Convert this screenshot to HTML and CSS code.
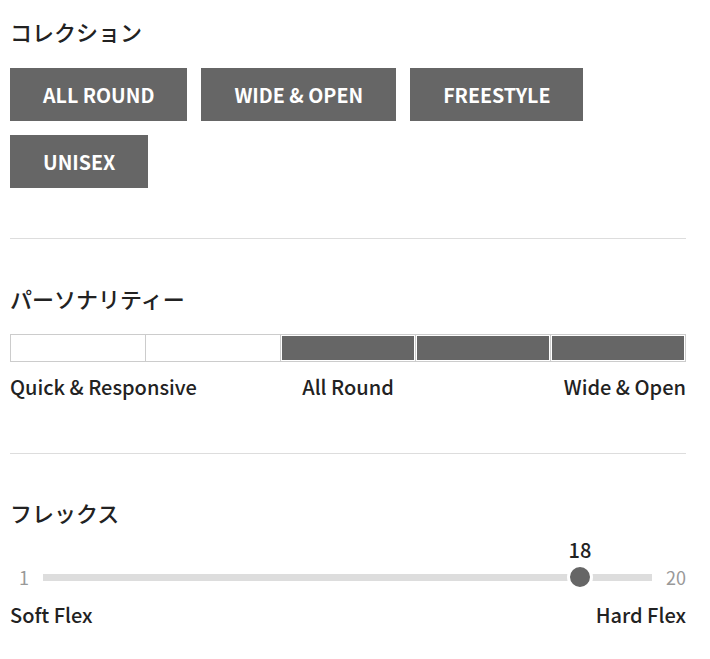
FILE: index.html
```html
<!DOCTYPE html>
<html lang="ja">
<head>
    <meta charset="UTF-8">
    <meta name="viewport" content="width=device-width, initial-scale=1.0">
    <title>Board Spec</title>
    <link rel="stylesheet" href="styles.css">
</head>
<body>
    <div class="spec">
        <section class="block">
            <h2>コレクション</h2>
            <div class="tags">
                <span class="tag">ALL ROUND</span>
                <span class="tag">WIDE &amp; OPEN</span>
                <span class="tag">FREESTYLE</span>
                <span class="tag">UNISEX</span>
            </div>
        </section>

        <section class="block persona">
            <h2>パーソナリティー</h2>
            <div class="scale">
                <div class="seg"></div>
                <div class="seg"></div>
                <div class="seg on"></div>
                <div class="seg on"></div>
                <div class="seg on"></div>
            </div>
            <div class="labels">
                <span>Quick &amp; Responsive</span>
                <span>All Round</span>
                <span>Wide &amp; Open</span>
            </div>
        </section>

        <section class="block last">
            <h2>フレックス</h2>
            <div class="slider">
                <span class="end">1</span>
                <div class="track">
                    <div class="thumb" style="left: calc((100% - 20px) * 0.8947 + 10px);">
                        <span class="value">18</span>
                    </div>
                </div>
                <span class="end">20</span>
            </div>
            <div class="labels two">
                <span>Soft Flex</span>
                <span>Hard Flex</span>
            </div>
        </section>
    </div>
</body>
</html>
```

FILE: styles.css
```css
body {
    margin: 0;
    padding: 0;
    background: #fff;
    color: #222;
    font-family: "Noto Sans CJK JP", "Noto Sans", sans-serif;
}
.spec {
    width: 676px;
    margin-left: 10px;
    padding-top: 16px;
}
.block {
    border-bottom: 1px solid #ddd;
    padding-bottom: 50px;
    margin-bottom: 44px;
}
.block.persona {
    padding-bottom: 52px;
    margin-bottom: 43px;
}
.block.last {
    border-bottom: none;
    margin-bottom: 0;
}
h2 {
    margin: 0;
    font-size: 22px;
    font-weight: 500;
    line-height: 30px;
}
.tags {
    display: flex;
    flex-wrap: wrap;
    gap: 14px;
    margin-top: 22px;
}
.tag {
    display: block;
    background: #666;
    color: #fff;
    font-size: 19.6px;
    font-weight: 700;
    height: 53px;
    line-height: 53px;
    padding: 0 33px;
}
.scale {
    display: flex;
    height: 28px;
    margin-top: 21px;
}
.seg {
    flex: 1;
    border: 1px solid #ccc;
    margin-left: -1px;
    background: #fff;
}
.seg:first-child {
    margin-left: 0;
}
.seg.on {
    background: #666;
    box-shadow: inset 0 0 0 1px #fff;
}
.labels {
    display: grid;
    grid-template-columns: 1fr 1fr 1fr;
    margin-top: 11px;
    font-size: 20px;
    font-weight: 500;
    line-height: 28px;
}
.labels span:nth-child(2) {
    text-align: center;
}
.labels span:last-child {
    text-align: right;
}
.labels.two {
    grid-template-columns: 1fr 1fr;
    margin-top: 12px;
}
.slider {
    display: flex;
    align-items: center;
    margin-top: 38px;
    height: 24px;
}
.end {
    color: #999;
    font-size: 18px;
    line-height: 24px;
}
.end:first-child {
    width: 33px;
    padding-left: 9px;
    box-sizing: border-box;
}
.end:last-child {
    width: 34px;
    text-align: right;
}
.track {
    flex: 1;
    position: relative;
    height: 7px;
    background: #ddd;
}
.thumb {
    position: absolute;
    top: 50%;
    width: 20px;
    height: 20px;
    margin: -13px 0 0 -13px;
    border: 3px solid #fff;
    border-radius: 50%;
    background: #666;
}
.value {
    position: absolute;
    bottom: 25px;
    left: 50%;
    transform: translateX(-50%);
    color: #222;
    font-size: 20px;
    font-weight: 500;
    line-height: 24px;
}
```
